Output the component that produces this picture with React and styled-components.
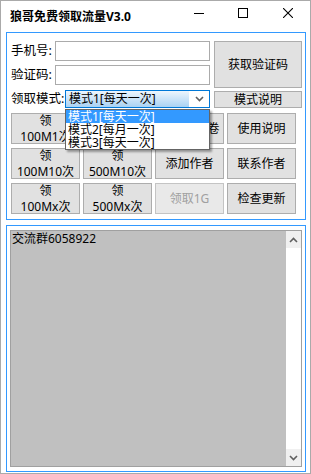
import React from 'react';
import styled, { createGlobalStyle } from 'styled-components';

const GlobalStyle = createGlobalStyle`
  html, body {
    margin: 0;
    padding: 0;
    background: #ffffff;
  }
  body {
    font-family: "Noto Sans", "Noto Sans CJK SC", sans-serif;
    color: #000000;
  }
  * {
    box-sizing: border-box;
  }
`;

const Window = styled.div`
  width: 311px;
  height: 474px;
  border: 1px solid #aaaaaa;
  background: #ffffff;
  display: flex;
  flex-direction: column;
`;

const TitleBar = styled.div`
  height: 31px;
  display: flex;
  align-items: flex-start;
  padding-left: 9px;
`;

const Title = styled.div`
  flex: 1;
  font-size: 12px;
  font-weight: bold;
  line-height: 14px;
  padding-top: 9px;
`;

const CaptionButton = styled.div`
  width: ${p => p.$w}px;
  height: 23px;
  display: flex;
  align-items: center;
  justify-content: center;
`;

const Body = styled.div`
  padding: 0 4px 0 5px;
  display: flex;
  flex-direction: column;
  gap: 5px;
`;

const Group = styled.div`
  height: ${p => p.$h}px;
  border: 1px solid #3399ff;
  padding: ${p => p.$pad};
  display: flex;
  flex-direction: column;
`;

const Form = styled.div`
  display: flex;
  gap: 4px;
  height: 67px;
`;

const Fields = styled.div`
  width: 200px;
  display: flex;
  flex-direction: column;
`;

const FieldRow = styled.div`
  display: flex;
  align-items: center;
  height: ${p => p.$h}px;
  margin-top: ${p => p.$mt || 0}px;
  position: relative;
`;

const Label = styled.div`
  width: ${p => p.$w}px;
  flex: none;
  font-size: 12.5px;
  line-height: 16px;
  padding-left: 1px;
  white-space: nowrap;
`;

const Input = styled.div`
  flex: 1;
  height: 100%;
  border: 1px solid #ababab;
  background: #ffffff;
`;

const Select = styled.div`
  flex: 1;
  height: 100%;
  border: 1px solid #0078d7;
  display: flex;
  background: #ffffff;
`;

const SelectValue = styled.div`
  flex: 1;
  background: linear-gradient(#eef6fd, #a9d2f3);
  font-size: 12px;
  line-height: 15px;
  padding-left: 3px;
  white-space: nowrap;
`;

const SelectArrow = styled.div`
  width: 20px;
  display: flex;
  align-items: center;
  justify-content: center;
`;

const DropList = styled.div`
  position: absolute;
  left: 55px;
  top: 19px;
  width: 145px;
  border: 1px solid #646464;
  background: #ffffff;
  box-shadow: 2px 2px 2px rgba(0, 0, 0, 0.35);
  z-index: 5;
`;

const DropItem = styled.div`
  height: 13px;
  font-size: 12px;
  line-height: 13px;
  padding-left: 2px;
  white-space: nowrap;
  background: ${p => (p.$active ? '#3399ff' : '#ffffff')};
  color: ${p => (p.$active ? '#ffffff' : '#000000')};
`;

const Side = styled.div`
  width: 88px;
  display: flex;
  flex-direction: column;
  gap: 3px;
`;

const Button = styled.div`
  height: ${p => (p.$h ? `${p.$h}px` : 'auto')};
  background: ${p => (p.$disabled ? '#e9e9e9' : '#e1e1e1')};
  border: 1px solid ${p => (p.$disabled ? '#c4c4c4' : '#adadad')};
  color: ${p => (p.$disabled ? '#a0a0a0' : '#000000')};
  font-size: 12px;
  line-height: 16px;
  display: flex;
  flex-direction: column;
  align-items: center;
  justify-content: center;
  white-space: nowrap;
`;

const Grid = styled.div`
  margin: 5px 0 0 1px;
  display: grid;
  grid-template-columns: repeat(4, 69px);
  grid-template-rows: repeat(3, 31px);
  column-gap: 3px;
  row-gap: 4px;
`;

const TextBox = styled.div`
  flex: 1;
  border: 1px solid #a0a0a0;
  display: flex;
`;

const TextContent = styled.div`
  flex: 1;
  background: #c0c0c0;
  font-size: 12px;
  line-height: 14px;
  padding: 1px 0 0 1px;
`;

const ScrollBar = styled.div`
  width: 15px;
  background: #ffffff;
  display: flex;
  flex-direction: column;
  justify-content: space-between;
`;

const ScrollArrow = styled.div`
  height: 17px;
  background: #f0f0f0;
  display: flex;
  align-items: center;
  justify-content: center;
`;

const Chevron = ({ up }) => (
  <svg width="9" height="6" viewBox="0 0 9 6">
    <path
      d={up ? 'M1 5 L4.5 1.5 L8 5' : 'M1 1 L4.5 4.5 L8 1'}
      fill="none"
      stroke="#606060"
      strokeWidth="1.6"
    />
  </svg>
);

const twoLine = (a, b) => (
  <>
    <span>{a}</span>
    <span>{b}</span>
  </>
);

const gridButtons = [
  { t: twoLine('领', '100M1次') },
  { t: twoLine('领', '500M1次') },
  { t: '领取流量卷' },
  { t: '使用说明' },
  { t: twoLine('领', '100M10次') },
  { t: twoLine('领', '500M10次') },
  { t: '添加作者' },
  { t: '联系作者' },
  { t: twoLine('领', '100Mx次') },
  { t: twoLine('领', '500Mx次') },
  { t: '领取1G', disabled: true },
  { t: '检查更新' },
];

const modes = ['模式1[每天一次]', '模式2[每月一次]', '模式3[每天一次]'];

export default function App() {
  return (
    <>
      <GlobalStyle />
      <Window>
        <TitleBar>
          <Title>狼哥免费领取流量V3.0</Title>
          <CaptionButton $w={42}>
            <svg width="10" height="10" viewBox="0 0 10 10">
              <line x1="0" y1="5.5" x2="10" y2="5.5" stroke="#000" strokeWidth="1" />
            </svg>
          </CaptionButton>
          <CaptionButton $w={45}>
            <svg width="10" height="10" viewBox="0 0 10 10">
              <rect x="0.5" y="0.5" width="9" height="9" fill="none" stroke="#000" strokeWidth="1" />
            </svg>
          </CaptionButton>
          <CaptionButton $w={45}>
            <svg width="10" height="10" viewBox="0 0 10 10">
              <path d="M0 0 L10 10 M10 0 L0 10" stroke="#000" strokeWidth="1.1" />
            </svg>
          </CaptionButton>
        </TitleBar>
        <Body>
          <Group $h={188} $pad="8px 0 0 3px">
            <Form>
              <Fields>
                <FieldRow $h={20}>
                  <Label $w={45}>手机号:</Label>
                  <Input />
                </FieldRow>
                <FieldRow $h={20} $mt={4}>
                  <Label $w={45}>验证码:</Label>
                  <Input />
                </FieldRow>
                <FieldRow $h={18} $mt={5}>
                  <Label $w={55}>领取模式:</Label>
                  <Select>
                    <SelectValue>模式1[每天一次]</SelectValue>
                    <SelectArrow>
                      <Chevron />
                    </SelectArrow>
                  </Select>
                  <DropList>
                    {modes.map((m, i) => (
                      <DropItem key={m} $active={i === 0}>
                        {m}
                      </DropItem>
                    ))}
                  </DropList>
                </FieldRow>
              </Fields>
              <Side>
                <Button $h={47}>获取验证码</Button>
                <Button $h={17}>模式说明</Button>
              </Side>
            </Form>
            <Grid>
              {gridButtons.map((b, i) => (
                <Button key={i} $disabled={b.disabled}>
                  {b.t}
                </Button>
              ))}
            </Grid>
          </Group>
          <Group $h={247} $pad="4px 3px 4px 3px">
            <TextBox>
              <TextContent>交流群6058922</TextContent>
              <ScrollBar>
                <ScrollArrow>
                  <Chevron up />
                </ScrollArrow>
                <ScrollArrow>
                  <Chevron />
                </ScrollArrow>
              </ScrollBar>
            </TextBox>
          </Group>
        </Body>
      </Window>
    </>
  );
}
